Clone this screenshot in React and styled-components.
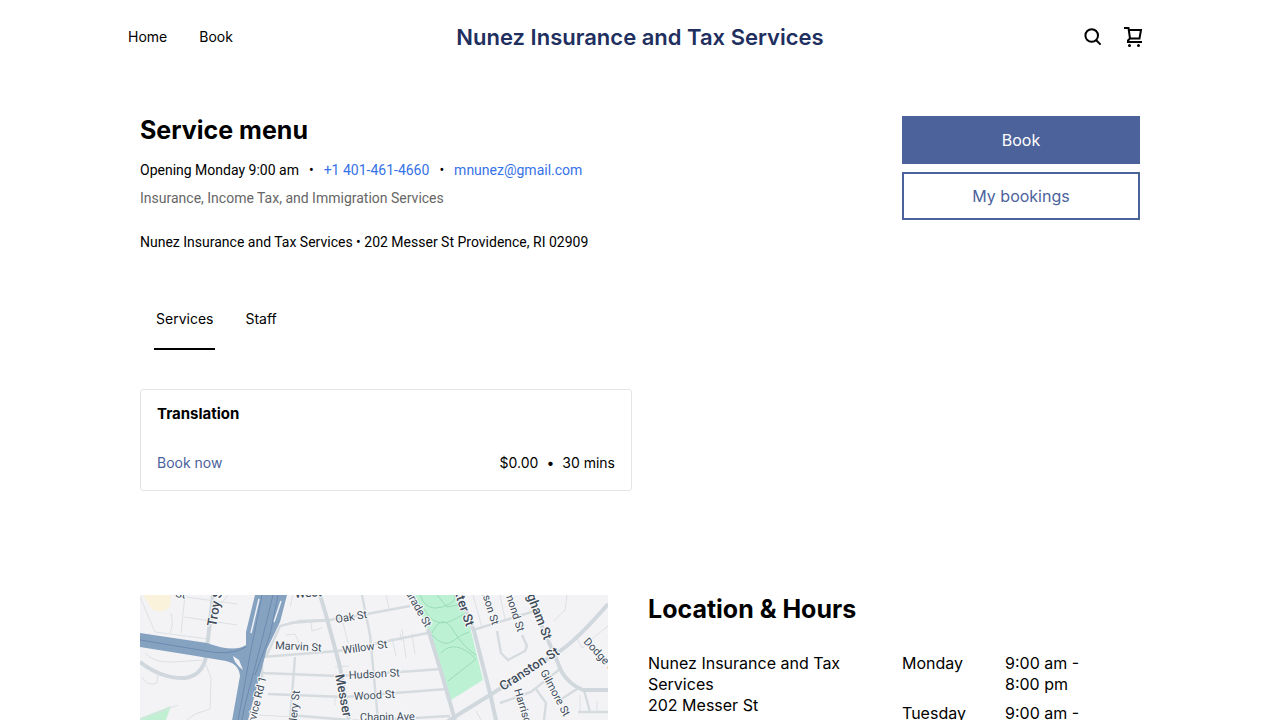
import React, { useState } from "react";
import styled, { createGlobalStyle } from "styled-components";

const GlobalStyle = createGlobalStyle`
  *, *::before, *::after {
    box-sizing: border-box;
  }

  body {
    background: #fff;
    color: #000;
    font-family: Inter, Roboto, "Liberation Sans", sans-serif;
    font-size: 14px;
    line-height: 20px;
    margin: 0;
  }

  h1, h2, h3, p, ul {
    margin: 0;
    padding: 0;
  }

  a {
    color: inherit;
    text-decoration: none;
  }

  button {
    background: none;
    border: 0;
    color: inherit;
    cursor: pointer;
    font: inherit;
    padding: 0;
  }
`;

const Header = styled.header`
  align-items: center;
  display: grid;
  grid-template-columns: 1fr auto 1fr;
  height: 74px;
  margin: 0 auto;
  max-width: 1024px;
`;

const Nav = styled.nav`
  display: flex;
  gap: 32px;
`;

const SiteTitle = styled.a`
  color: #212f5f;
  font-size: 22px;
  font-weight: 600;
  line-height: 28px;
`;

const Actions = styled.div`
  display: flex;
  gap: 16px;
  justify-content: flex-end;
  padding-right: 7px;
`;

const IconButton = styled.button`
  display: flex;
  height: 24px;
  width: 24px;
`;

const Main = styled.main`
  margin: 0 auto;
  max-width: 1000px;
  padding-top: 42px;
`;

const Intro = styled.section`
  display: flex;
  gap: 16px;
  justify-content: space-between;
`;

const Heading = styled.h2`
  font-size: 25px;
  font-weight: 700;
  line-height: 28px;
`;

const Summary = styled.div`
  font-family: Roboto, "Liberation Sans", sans-serif;
`;

const Contact = styled.p`
  display: flex;
  gap: 10px;
  margin-top: 16px;
`;

const ContactLink = styled.a`
  color: #3672e8;
`;

const Tagline = styled.p`
  color: #666;
  margin-top: 8px;
`;

const Address = styled.p`
  margin-top: 24px;
`;

const ButtonStack = styled.div`
  display: flex;
  flex: 0 0 238px;
  flex-direction: column;
  gap: 8px;
`;

const Button = styled.button`
  background: ${(props) => (props.$outline ? "#fff" : "#4b629b")};
  border: 2px solid #4b629b;
  color: ${(props) => (props.$outline ? "#4b629b" : "#fff")};
  font-size: 16px;
  height: 48px;
`;

const Tabs = styled.div`
  display: flex;
  gap: 28px;
  margin-top: 36px;
  padding: 0 14px;
`;

const Tab = styled.button`
  border-bottom: 2px solid ${(props) => (props.$active ? "#000" : "transparent")};
  height: 62px;
  padding: 2px 2px 0;
`;

const Columns = styled.section`
  display: grid;
  gap: 16px;
  grid-template-columns: repeat(2, 1fr);
  margin-top: ${(props) => props.$space}px;
`;

const Card = styled.article`
  border: 1px solid #e4e4e4;
  border-radius: 3px;
  padding: 14px 16px 17px;
`;

const CardTitle = styled.h3`
  font-size: 15px;
  font-weight: 700;
  line-height: 20px;
`;

const CardFooter = styled.div`
  display: flex;
  justify-content: space-between;
  margin-top: 29px;
`;

const BookLink = styled.a`
  color: #4b629b;
`;

const Price = styled.span`
  display: flex;
  gap: 8px;
`;

const MapFrame = styled.div`
  padding-right: 24px;

  & svg {
    display: block;
    height: auto;
    width: 100%;
  }
`;

const Details = styled.div`
  display: grid;
  font-size: 16px;
  gap: 16px;
  grid-template-columns: repeat(2, 1fr);
  line-height: 21px;
  margin-top: 30px;
`;

const Street = styled.address`
  font-style: normal;
  padding-right: 32px;
`;

const Hours = styled.table`
  border-collapse: collapse;
  width: 100%;

  & th, & td {
    font-weight: 400;
    padding: 0 0 8px;
    text-align: left;
    vertical-align: top;
  }

  & th {
    width: 103px;
  }

  & td {
    padding-right: 32px;
  }
`;

const hours = [
  { day: "Monday", time: "9:00 am - 8:00 pm" },
  { day: "Tuesday", time: "9:00 am - 8:00 pm" },
];

const minorRoads = [
  "M0 2L15 37L68 44M45 0L41 38M44 22L97 30M46 2L97 9M88 0L80 10M31 18Q34 30 30 38",
  "M5 58Q14 68 32 67T62 65M66 70L71 83L70 114L55 119L47 125M2 82Q8 92 17 88L18 80M0 124L38 110",
  "M153 0L150 12M120 62L122 78L170 80M128 99L153 101M118 120L153 122M146 40L155 39L160 50",
  "M246 0L249 14M260 38L262 46M252 43L256 61M262 34L266 63M272 39L275 59",
  "M171 28L172 36L182 33M203 28L208 48M195 72L209 71M195 100V110",
  "M333 0L342 32M360 0L365 24M427 0L425 15L414 26M435 40L442 53L449 48M447 48L468 31",
  "M440 100V117M457 106V117M336 116L341 125",
];

const streets = [
  "M150 28L190 25L227 19L270 11",
  "M122 62L198 56L248 46L288 38",
  "M122 78L198 81L260 77L301 74",
  "M128 99L205 102L255 98L307 94",
  "M150 120L220 126L310 121",
  "M122 60V85M155 62L150 125M126 62L140 31L160 26L190 25",
  "M333 35L395 16M360 108L391 97L420 74M420 105L440 92M438 117H468M444 95L450 117",
  "M222 0L230 40L238 125M357 36L361 58L368 65L385 56L387 51L382 40M396 94L406 108L404 125",
];

const mainRoads = [
  "M180 0L186 20L200 72L209 125L214 148",
  "M0 67Q22 84 45 83Q66 80 67 53L73 0",
  "M288 34L302 80L315 125M320 0L334 36L350 98L361 148",
  "M388 0L418 68Q424 87 443 95H468",
  "M308 126L350 100L420 56Q439 43 468 9",
];

const labels = [
  { text: "Oak St", x: 196, y: 28, angle: -9 },
  { text: "Marvin St", x: 135, y: 54, angle: 3 },
  { text: "Willow St", x: 203, y: 59, angle: -8 },
  { text: "Hudson St", x: 209, y: 84, angle: -3 },
  { text: "Wood St", x: 214, y: 105, angle: -3 },
  { text: "Chapin Ave", x: 220, y: 126, angle: -1 },
  { text: "West", x: 155, y: 3, angle: -4, size: 12 },
  { text: "St", x: 35, y: 2, angle: 8 },
  { text: "Troy St", x: 76, y: 32, angle: -80, size: 13 },
  { text: "Service Rd 1", x: 112, y: 141, angle: -76 },
  { text: "Gallery St", x: 155, y: 142, angle: -84 },
  { text: "Messer St", x: 195, y: 80, angle: 79, size: 13 },
  { text: "Parade St", x: 262, y: -8, angle: 60 },
  { text: "Baxter St", x: 309, y: -18, angle: 71, size: 13 },
  { text: "Wilson St", x: 338, y: -13, angle: 72 },
  { text: "Almond St", x: 362, y: -11, angle: 72 },
  { text: "Bingham St", x: 380, y: -17, angle: 69, size: 13 },
  { text: "Cranston St", x: 363, y: 96, angle: -33, size: 13 },
  { text: "Dodge St", x: 443, y: 47, angle: 47 },
  { text: "Gilmore St", x: 400, y: 77, angle: 62 },
  { text: "Harrison St", x: 374, y: 95, angle: 73 },
];

function StreetMap() {
  return (
    <svg viewBox="0 0 468 148" role="img" aria-label="Map of 202 Messer St">
      <rect width="468" height="148" fill="#f3f3f5" />
      <path d="M3 0H31L30 12Q20 20 12 14Z" fill="#fbf2dc" />
      <path d="M0 123L31 111L26 125L22 148H0Z" fill="#c1efd2" />
      <path d="M275 0H317L329 28L343 85L311 105L288 36Z" fill="#bcf1d4" />
      <g fill="none" stroke="#9bdcb7" strokeWidth="1">
        <path d="M280 0Q286 17 302 12T314 0M284 14Q295 35 315 24T326 22M292 38Q302 17 313 35T336 60" />
        <path d="M292 40Q304 53 313 46T329 37M301 58Q315 43 336 64L308 86M297 0L307 12L323 9" />
      </g>
      <g fill="none" stroke="#dce1e4" strokeWidth="1">
        {minorRoads.map((d) => <path key={d} d={d} />)}
      </g>
      <g fill="none" stroke="#d5dbdf" strokeWidth="2.4">
        {streets.map((d) => <path key={d} d={d} />)}
      </g>
      <g fill="none" stroke="#d0d8dd" strokeWidth="4">
        {mainRoads.map((d) => <path key={d} d={d} />)}
      </g>
      <path
        d="M0 38L67 48Q94 58 106 50L106 37L115 0H147L140 27L127 54L120 80L102 148H88L100 81Q99 69 86 66L50 60L0 52Z"
        fill="#86a2c1"
      />
      <path d="M93 61L99 65L103 75Q94 68 93 61Z" fill="#f3f3f5" />
      <path d="M119 4L111 38M141 6L134 27" fill="none" stroke="#eef1f5" strokeWidth="1.5" />
      <g fill="none" stroke="#6c8bb0" strokeWidth="1">
        <path d="M0 45L60 55Q90 62 106 52M122 0L110 60L94 148M133 0L122 45L105 110L97 148M138 0L130 40L115 80" />
      </g>
      <g fontFamily="Roboto, sans-serif" fill="#414c5b" stroke="#f8f9fa" strokeWidth="2" paintOrder="stroke">
        {labels.map(({ text, x, y, angle, size = 11 }) => (
          <text
            key={text}
            fontSize={size}
            fontWeight={size > 11 ? 500 : 400}
            transform={`translate(${x} ${y}) rotate(${angle})`}
          >
            {text}
          </text>
        ))}
      </g>
    </svg>
  );
}

function SearchIcon() {
  return (
    <svg width="24" height="24" viewBox="0 0 24 24" fill="none" stroke="#000" strokeWidth="2">
      <circle cx="10.7" cy="10.5" r="6.3" />
      <path d="M15 15L19.6 19.6" />
    </svg>
  );
}

function CartIcon() {
  return (
    <svg width="24" height="24" viewBox="0 0 24 24" fill="none" stroke="#000" strokeWidth="2">
      <path d="M3 3H7.5L9 13.5H18.5L20 5H8M9 13.5L7 15.5V17H21" />
      <circle cx="8.5" cy="20.5" r="1.5" fill="#000" stroke="none" />
      <circle cx="17.5" cy="20.5" r="1.5" fill="#000" stroke="none" />
    </svg>
  );
}

export default function App() {
  const [tab, setTab] = useState("Services");

  return (
    <>
      <GlobalStyle />
      <Header>
        <Nav>
          <a href="#home">Home</a>
          <a href="#book">Book</a>
        </Nav>
        <SiteTitle href="#home">Nunez Insurance and Tax Services</SiteTitle>
        <Actions>
          <IconButton aria-label="Search"><SearchIcon /></IconButton>
          <IconButton aria-label="Cart"><CartIcon /></IconButton>
        </Actions>
      </Header>
      <Main>
        <Intro>
          <div>
            <Heading as="h1">Service menu</Heading>
            <Summary>
              <Contact>
                <span>Opening Monday 9:00 am</span>
                <span>•</span>
                <ContactLink href="tel:+14014614660">+1 401-461-4660</ContactLink>
                <span>•</span>
                <ContactLink href="mailto:mnunez@gmail.com">mnunez@gmail.com</ContactLink>
              </Contact>
              <Tagline>Insurance, Income Tax, and Immigration Services</Tagline>
              <Address>Nunez Insurance and Tax Services • 202 Messer St Providence, RI 02909</Address>
            </Summary>
          </div>
          <ButtonStack>
            <Button>Book</Button>
            <Button $outline>My bookings</Button>
          </ButtonStack>
        </Intro>
        <Tabs role="tablist">
          {["Services", "Staff"].map((name) => (
            <Tab
              key={name}
              role="tab"
              aria-selected={tab === name}
              $active={tab === name}
              onClick={() => setTab(name)}
            >
              {name}
            </Tab>
          ))}
        </Tabs>
        <Columns $space={39}>
          <Card>
            <CardTitle>Translation</CardTitle>
            <CardFooter>
              <BookLink href="#book">Book now</BookLink>
              <Price>
                <span>$0.00</span>
                <span>•</span>
                <span>30 mins</span>
              </Price>
            </CardFooter>
          </Card>
        </Columns>
        <Columns $space={104}>
          <MapFrame>
            <StreetMap />
          </MapFrame>
          <div>
            <Heading>Location &amp; Hours</Heading>
            <Details>
              <Street>
                Nunez Insurance and Tax Services
                <br />
                202 Messer St
              </Street>
              <Hours>
                <tbody>
                  {hours.map(({ day, time }) => (
                    <tr key={day}>
                      <th scope="row">{day}</th>
                      <td>{time}</td>
                    </tr>
                  ))}
                </tbody>
              </Hours>
            </Details>
          </div>
        </Columns>
      </Main>
    </>
  );
}
